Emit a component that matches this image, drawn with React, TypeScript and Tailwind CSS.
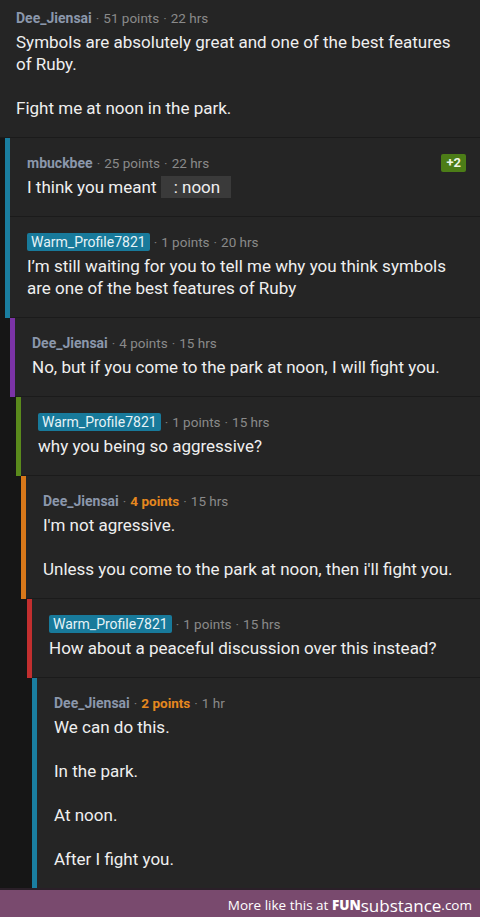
import React from "react";

type Comment = {
  user: string;
  points: string;
  hot?: boolean;
  time: string;
  badge?: boolean;
  gutter: string;
  bar?: string;
  top?: string;
  body: React.ReactNode[];
  score?: string;
};

const comments: Comment[] = [
  {
    user: "Dee_Jiensai",
    points: "51 points",
    time: "22 hrs",
    gutter: "w-0",
    top: "pt-[9px]",
    body: [
      "Symbols are absolutely great and one of the best features of Ruby.",
      "Fight me at noon in the park.",
    ],
  },
  {
    user: "mbuckbee",
    points: "25 points",
    time: "22 hrs",
    gutter: "w-[5px]",
    bar: "bg-[#1a7ea0]",
    score: "+2",
    body: [
      <>
        I think you meant{" "}
        <span className="bg-[#3a3a3a] pl-[13px] pr-[11px] py-[1px]">: noon</span>
      </>,
    ],
  },
  {
    user: "Warm_Profile7821",
    points: "1 points",
    time: "20 hrs",
    badge: true,
    gutter: "w-[5px]",
    bar: "bg-[#1a7ea0]",
    body: [
      "I’m still waiting for you to tell me why you think symbols are one of the best features of Ruby",
    ],
  },
  {
    user: "Dee_Jiensai",
    points: "4 points",
    time: "15 hrs",
    gutter: "w-[10px]",
    bar: "bg-[#7b33a6]",
    body: ["No, but if you come to the park at noon, I will fight you."],
  },
  {
    user: "Warm_Profile7821",
    points: "1 points",
    time: "15 hrs",
    badge: true,
    gutter: "w-[16px]",
    bar: "bg-[#5a8a1c]",
    body: ["why you being so aggressive?"],
  },
  {
    user: "Dee_Jiensai",
    points: "4 points",
    hot: true,
    time: "15 hrs",
    gutter: "w-[21px]",
    bar: "bg-[#d8781a]",
    body: [
      "I'm not agressive.",
      "Unless you come to the park at noon, then i'll fight you.",
    ],
  },
  {
    user: "Warm_Profile7821",
    points: "1 points",
    time: "15 hrs",
    badge: true,
    gutter: "w-[27px]",
    bar: "bg-[#c22f2f]",
    body: ["How about a peaceful discussion over this instead?"],
  },
  {
    user: "Dee_Jiensai",
    points: "2 points",
    hot: true,
    time: "1 hr",
    gutter: "w-[32px]",
    bar: "bg-[#1a7ea0]",
    body: ["We can do this.", "In the park.", "At noon.", "After I fight you."],
  },
];

function Row({ c, last }: { c: Comment; last: boolean }) {
  return (
    <div className={`flex ${last ? "flex-1" : ""}`}>
      <div className={`${c.gutter} shrink-0 bg-[#161616]`} />
      {c.bar && <div className={`w-[5px] shrink-0 ${c.bar}`} />}
      <div
        className={`flex-1 bg-[#252525] ${c.top ?? "pt-4"} pb-[18px] ${
          c.bar ? "pl-[17px]" : "pl-4"
        } pr-4 ${last ? "" : "border-b border-[#1b1b1b]"}`}
      >
        <div className="flex items-center justify-between h-[18px] leading-[18px]">
          <div className="flex items-center text-[13.5px]">
            {c.badge ? (
              <span className="bg-[#187a9b] text-[#e6f3f7] text-[14px] rounded-[2px] px-1 h-[18px]">
                {c.user}
              </span>
            ) : (
              <span className="font-bold text-[14px] text-[#8b97ab]">{c.user}</span>
            )}
            <span className="text-[#7a7a7a] mx-[4px]">·</span>
            <span className={c.hot ? "font-bold text-[#e5881f]" : "text-[#8a8a8a]"}>
              {c.points}
            </span>
            <span className="text-[#7a7a7a] mx-[4px]">·</span>
            <span className="text-[#8a8a8a]">{c.time}</span>
          </div>
          {c.score && (
            <span className="bg-[#4c7d17] text-[#eef5e4] font-bold text-[13px] leading-[18px] px-[5px] rounded-[2px] -mr-[2px]">
              {c.score}
            </span>
          )}
        </div>
        <div className="mt-1 text-[17px] leading-[22px] text-[#efefef] flex flex-col gap-[22px]">
          {c.body.map((p, i) => (
            <p key={i}>{p}</p>
          ))}
        </div>
      </div>
    </div>
  );
}

export default function App() {
  return (
    <div className="h-[917px] w-[480px] flex flex-col bg-[#161616] font-['Roboto',sans-serif] overflow-hidden">
      {comments.map((c, i) => (
        <Row key={i} c={c} last={i === comments.length - 1} />
      ))}
      <div className="h-[32px] shrink-0 bg-[#794a6e] border-t-2 border-[#2a1f28] flex items-center justify-end pr-2 text-white font-['Open_Sans',sans-serif]">
        <span className="text-[13.5px]">More like this at&nbsp;</span>
        <span className="text-[13.5px] font-extrabold">FUN</span>
        <span className="text-[17px] leading-none">substance</span>
        <span className="text-[13.5px]">.com</span>
      </div>
    </div>
  );
}
